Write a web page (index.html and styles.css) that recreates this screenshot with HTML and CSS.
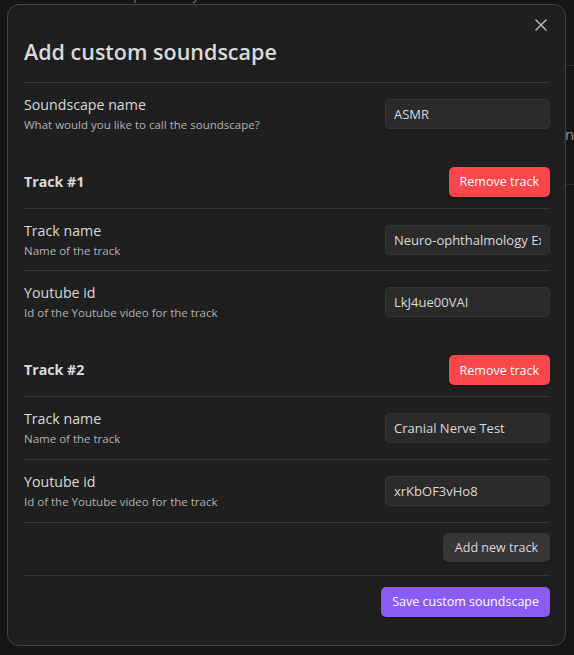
FILE: index.html
```html
<!DOCTYPE html>
<html lang="en">
<head>
<meta charset="utf-8">
<title>Add custom soundscape</title>
<link rel="stylesheet" href="styles.css">
</head>
<body>
<div class="bg-page">
  <p class="bg-question">Which soundscape would you like to listen to?</p>
  <div class="bg-rule"></div>
  <div class="bg-row"><span class="bg-name">name</span></div>
  <div class="bg-rule bg-rule2"></div>
</div>

<div class="modal-container">
  <div class="modal">
    <button class="modal-close" aria-label="Close">
      <svg width="12" height="12" viewBox="0 0 12 12" fill="none" stroke="currentColor" stroke-width="1.5" stroke-linecap="round"><path d="M1 1 11 11M11 1 1 11"/></svg>
    </button>
    <div class="modal-title">Add custom soundscape</div>
    <div class="modal-content">
      <div class="setting-item">
        <div class="setting-info">
          <div class="setting-name">Soundscape name</div>
          <div class="setting-desc">What would you like to call the soundscape?</div>
        </div>
        <div class="setting-control"><input class="text-input" type="text" value="ASMR"></div>
      </div>

      <div class="setting-item setting-heading">
        <div class="setting-info"><div class="setting-name heading-name">Track #1</div></div>
        <div class="setting-control"><button class="btn btn-warning">Remove track</button></div>
      </div>
      <div class="setting-item">
        <div class="setting-info">
          <div class="setting-name">Track name</div>
          <div class="setting-desc">Name of the track</div>
        </div>
        <div class="setting-control"><input class="text-input" type="text" value="Neuro-ophthalmology Exam"></div>
      </div>
      <div class="setting-item">
        <div class="setting-info">
          <div class="setting-name">Youtube id</div>
          <div class="setting-desc">Id of the Youtube video for the track</div>
        </div>
        <div class="setting-control"><input class="text-input" type="text" value="LkJ4ue00VAI"></div>
      </div>

      <div class="setting-item setting-heading">
        <div class="setting-info"><div class="setting-name heading-name">Track #2</div></div>
        <div class="setting-control"><button class="btn btn-warning">Remove track</button></div>
      </div>
      <div class="setting-item">
        <div class="setting-info">
          <div class="setting-name">Track name</div>
          <div class="setting-desc">Name of the track</div>
        </div>
        <div class="setting-control"><input class="text-input" type="text" value="Cranial Nerve Test"></div>
      </div>
      <div class="setting-item">
        <div class="setting-info">
          <div class="setting-name">Youtube id</div>
          <div class="setting-desc">Id of the Youtube video for the track</div>
        </div>
        <div class="setting-control"><input class="text-input" type="text" value="xrKbOF3vHo8"></div>
      </div>

      <div class="setting-item button-row add-row">
        <div class="setting-info"></div>
        <div class="setting-control"><button class="btn btn-add">Add new track</button></div>
      </div>
      <div class="setting-item button-row save-row">
        <div class="setting-info"></div>
        <div class="setting-control"><button class="btn btn-cta">Save custom soundscape</button></div>
      </div>
    </div>
  </div>
</div>
</body>
</html>
```

FILE: styles.css
```css
* { box-sizing: border-box; }

html, body {
  margin: 0;
  padding: 0;
  width: 574px;
  height: 655px;
  overflow: hidden;
  background: #151515;
  font-family: "Open Sans", "Noto Sans", sans-serif;
}

/* background page (dimmed, behind the modal) */
.bg-page {
  color: #8a8a8a;
  font-size: 13px;
}
.bg-question {
  margin: -13px 0 0 35px;
  line-height: 17px;
  color: #6f7a8c;
}
.bg-rule {
  margin: 61px 0 0 35px;
  border-top: 1px solid #2c2c2c;
}
.bg-row {
  padding: 58px 0 0 565px;
  font-size: 15px;
  line-height: 20px;
  white-space: nowrap;
  color: #8a8a8a;
}
.bg-rule2 { margin-top: 40px; }

/* modal */
.modal-container {
  position: absolute;
  inset: 0;
}
.modal {
  position: absolute;
  left: 7px;
  top: 4px;
  width: 559px;
  height: 642px;
  background: #1e1e1e;
  border: 1px solid #444;
  border-radius: 12px;
  padding: 16px 15px 0 16px;
  color: #dadada;
}
.modal-close {
  position: absolute;
  top: 8px;
  right: 12px;
  width: 24px;
  height: 24px;
  border: 0;
  background: transparent;
  color: #b8b8b8;
  padding: 0;
  display: flex;
  align-items: center;
  justify-content: center;
}
.modal-title {
  margin-top: 16px;
  font-size: 21.5px;
  font-weight: 600;
  line-height: 30px;
  color: #dadada;
  padding-bottom: 15px;
}

.setting-item {
  display: flex;
  align-items: center;
  gap: 16px;
  padding: 12px 0;
  border-top: 1px solid #363636;
}
.setting-info { flex: 1; min-width: 0; }
.setting-name {
  font-size: 14.2px;
  line-height: 20px;
  color: #dadada;
}
.setting-desc {
  font-size: 11.5px;
  line-height: 15.7px;
  padding-top: 2px;
  color: #b3b3b3;
}
.setting-heading {
  border-top: 0;
  padding: 22px 0 11px;
}
.heading-name { font-weight: 700; }

.setting-control { display: flex; }

.text-input {
  width: 165px;
  height: 30px;
  background: #2a2a2a;
  border: 1px solid #363636;
  border-radius: 5px;
  color: #dadada;
  font-family: inherit;
  font-size: 13px;
  padding: 0 8px;
  outline: none;
}

.btn {
  height: 30px;
  padding: 0 12px;
  border: 0;
  border-radius: 5px;
  font-family: inherit;
  font-size: 12.5px;
  font-weight: 500;
  color: #dadada;
  background: #363636;
  box-shadow: 0 1px 2px rgba(0,0,0,0.35);
}
.btn-warning { background: #fb464c; color: #fff; padding: 0 11px; }
.btn-cta { background: #8a5cf5; color: #fff; padding: 0 11px; }
.btn-add { height: 29px; }

.add-row { padding: 10px 0 13px; }
.save-row { padding: 11px 0 12px; }
```
